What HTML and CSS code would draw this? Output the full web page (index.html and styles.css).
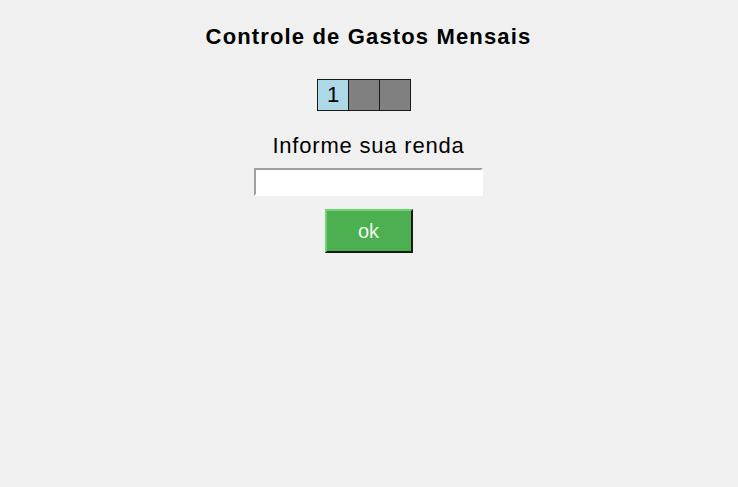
FILE: index.html
```html
<!DOCTYPE html>
<html>
<head>
<meta charset="utf-8">
<link rel="stylesheet" href="styles.css">
</head>
<body>
<div class="app">
  <h1 class="title">Controle de Gastos Mensais</h1>
  <div class="steps">
    <div class="step active">1</div>
    <div class="step"></div>
    <div class="step"></div>
  </div>
  <label class="label" for="renda">Informe sua renda</label>
  <input class="field" id="renda" type="text">
  <button class="ok">ok</button>
</div>
</body>
</html>
```
FILE: styles.css
```css
html, body {
  margin: 0;
  padding: 0;
  background: #f0f0f0;
  height: 100%;
}
.app {
  display: flex;
  flex-direction: column;
  align-items: center;
  font-family: "Liberation Sans", Arial, sans-serif;
  color: #000;
  padding-top: 24px;
  padding-right: 1px;
}
.title {
  margin: 0;
  font-size: 22px;
  font-weight: bold;
  letter-spacing: 1.15px;
  line-height: 26px;
  height: 26px;
}
.steps {
  display: flex;
  margin-top: 29px;
  margin-right: 9px;
}
.step {
  width: 30px;
  height: 30px;
  border: 1px solid #1a1a1a;
  background: #808080;
  margin-left: -1px;
  font-size: 22px;
  line-height: 30px;
  text-align: center;
}
.step:first-child {
  margin-left: 0;
}
.step.active {
  background: #add8e6;
}
.label {
  margin-top: 22px;
  font-size: 22px;
  letter-spacing: 0.8px;
  line-height: 26px;
}
.field {
  margin-top: 9px;
  width: 225px;
  height: 24px;
  box-sizing: content-box;
  padding: 0;
  border-style: solid;
  border-width: 2px;
  border-color: #a0a0a0 #ffffff #ffffff #a0a0a0;
  background: #fff;
  outline: none;
}
.ok {
  margin-top: 13px;
  width: 88px;
  height: 44px;
  box-sizing: border-box;
  background: #4caf50;
  border-style: solid;
  border-width: 2px;
  border-color: #6fd273 #1a1a1a #1a1a1a #6fd273;
  color: #eef8ee;
  font-family: "Liberation Sans", Arial, sans-serif;
  font-size: 20px;
  padding: 0;
}
```
